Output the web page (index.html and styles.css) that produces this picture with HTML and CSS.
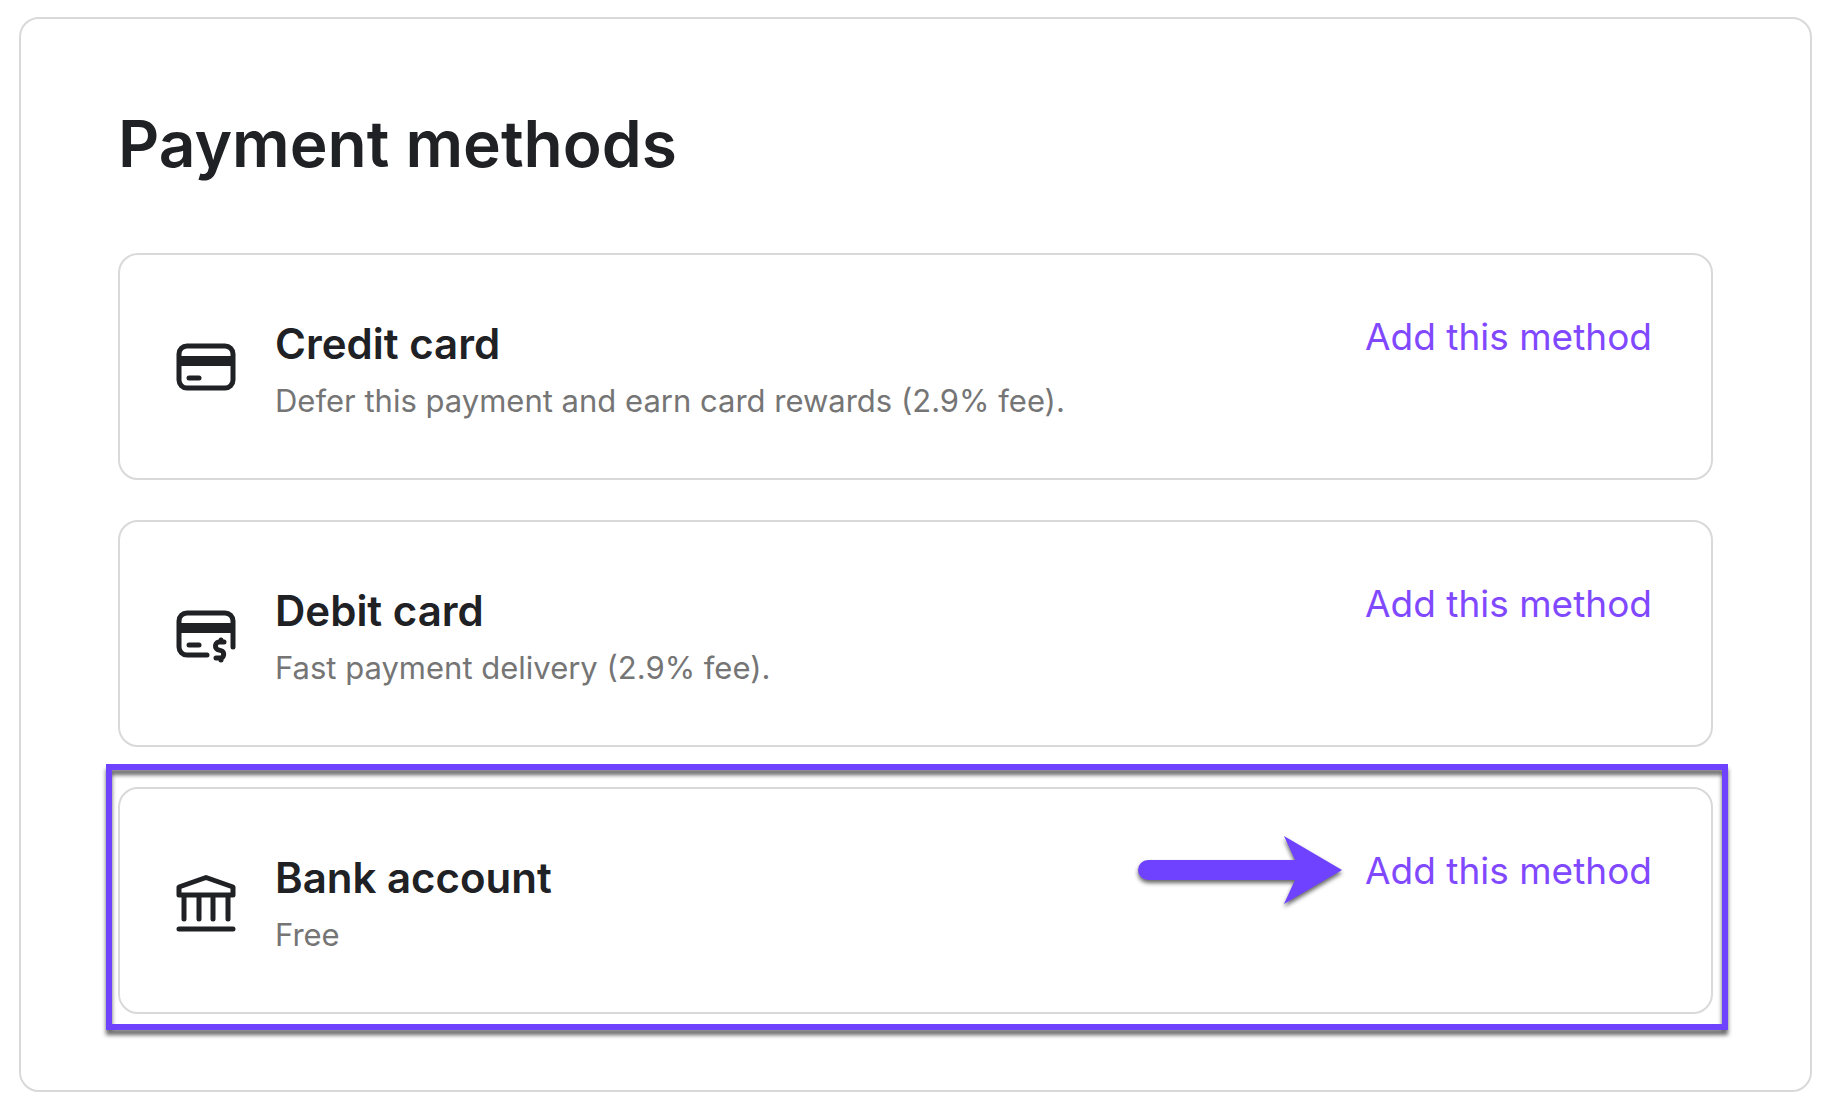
FILE: index.html
```html
<!DOCTYPE html>
<html lang="en">
<head>
  <meta charset="utf-8">
  <meta name="viewport" content="width=device-width, initial-scale=1">
  <title>Payment methods</title>
  <link rel="stylesheet" href="styles.css">
</head>
<body>
  <main class="panel">
    <h1 class="panel-title">Payment methods</h1>
    <ul class="methods">
      <li class="method">
        <svg class="method-icon" viewBox="0 0 60 62" aria-hidden="true">
          <rect class="line" x="3" y="9" width="54" height="42" rx="8"/>
          <path class="solid" d="M3 19h54v10H3z"/>
          <path class="line" d="M13 41h10"/>
        </svg>
        <div class="method-text">
          <h2 class="method-name">Credit card</h2>
          <p class="method-note">Defer this payment and earn card rewards (2.9% fee).</p>
        </div>
        <a class="method-link" href="#credit-card">Add this method</a>
      </li>
      <li class="method">
        <svg class="method-icon" viewBox="0 0 60 62" aria-hidden="true">
          <path class="line" d="M31 51H11a8 8 0 0 1-8-8V17a8 8 0 0 1 8-8h38a8 8 0 0 1 8 8v26"/>
          <path class="solid" d="M3 19h54v10H3z"/>
          <path class="line" d="M13 41h10"/>
          <path class="line" d="M48 38h-4a4 4 0 0 0-1 8l3 1a4 4 0 0 1-1 7h-5M45 36v2M45 54v2"/>
        </svg>
        <div class="method-text">
          <h2 class="method-name">Debit card</h2>
          <p class="method-note">Fast payment delivery (2.9% fee).</p>
        </div>
        <a class="method-link" href="#debit-card">Add this method</a>
      </li>
      <li class="method method-highlighted">
        <svg class="method-icon" viewBox="0 0 60 62" aria-hidden="true">
          <path class="line" d="M3 16 30 6.500 57 16v8H3zM8 24v24M23 24v24M37 24v24M52 24v24M3 58h54"/>
        </svg>
        <div class="method-text">
          <h2 class="method-name">Bank account</h2>
          <p class="method-note">Free</p>
        </div>
        <a class="method-link" href="#bank-account">Add this method
          <svg class="arrow" viewBox="0 0 204 68" aria-hidden="true">
            <path d="M10 24h147L146 0l58 34-58 34 11-24H10a10 10 0 0 1 0-20z"/>
          </svg>
        </a>
      </li>
    </ul>
  </main>
</body>
</html>
```
FILE: styles.css
```css
* {
  box-sizing: border-box;
}

body {
  margin: 0;
  padding: 17px 14px 20px 19px;
  background: #fff;
  color: #202124;
  font-family: Inter, "Liberation Sans", sans-serif;
}

.panel {
  padding: 81px 97px 76px;
  border: 2px solid #d9d9d9;
  border-radius: 20px;
}

.panel-title {
  margin: 0 0 65px;
  font-size: 64px;
  font-weight: 600;
  line-height: 88px;
}

.methods {
  display: flex;
  flex-direction: column;
  gap: 40px;
  margin: 0;
  padding: 0;
  list-style: none;
}

.method {
  position: relative;
  display: flex;
  align-items: flex-start;
  padding: 56px 59px 53px 56px;
  border: 2px solid #d9d9d9;
  border-radius: 20px;
}

.method-icon {
  flex: none;
  align-self: center;
  width: 60px;
  height: 62px;
}

.line {
  fill: none;
  stroke: #202124;
  stroke-width: 5;
  stroke-linecap: round;
  stroke-linejoin: round;
}

.solid {
  fill: #202124;
}

.method-text {
  flex: 1;
  padding-left: 39px;
}

.method-name {
  margin: 0;
  font-size: 42px;
  font-weight: 600;
  line-height: 66px;
}

.method-note {
  margin: 0;
  color: #757575;
  font-size: 31px;
  line-height: 48px;
}

.method-link {
  position: relative;
  color: #8048ff;
  font-size: 37px;
  line-height: 52px;
  text-decoration: none;
  white-space: nowrap;
}

/* Frame drawn around the recommended method, over the card's own border. */
.method-highlighted::after {
  content: "";
  position: absolute;
  inset: -25px -17px -18px -14px;
  border: 6px solid #6f42ff;
  filter: drop-shadow(0 5px 2px rgba(0, 0, 0, 0.6));
  pointer-events: none;
}

.arrow {
  position: absolute;
  top: -9px;
  right: calc(100% + 23px);
  width: 204px;
  height: 68px;
  overflow: visible;
  fill: #6f42ff;
  filter: drop-shadow(0 3px 2px rgba(0, 0, 0, 0.6));
}
```
